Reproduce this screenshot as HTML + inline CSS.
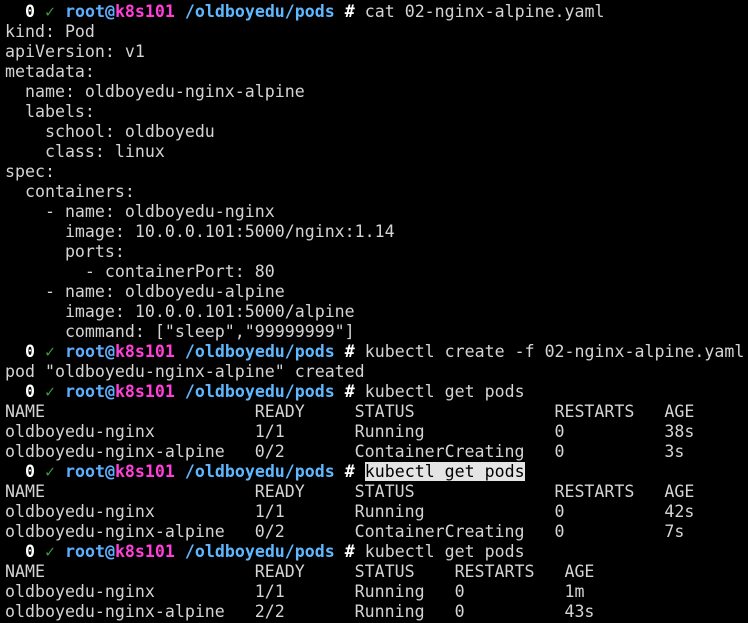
<!DOCTYPE html><html><head><style>
html,body{margin:0;background:#000;}
body{width:748px;height:623px;overflow:hidden;}
pre{margin:0;padding:2px 0 0 5px;font-family:"DejaVu Sans Mono","Liberation Mono",monospace;font-size:16.6px;line-height:20px;color:#d4d4d4;white-space:pre;}
.w{color:#fff;font-weight:bold}.g{color:#3a9a3a}.b{color:#5fafff;font-weight:bold}.m{color:#ff3fd8;font-weight:bold}.c{color:#5fb8ff;font-weight:bold}
.s{background:#e4e4e4;color:#000}
</style></head><body><pre><span class="w">  0</span> <span class="g">✓</span> <span class="b">root@</span><span class="m">k8s101</span> <span class="c">/oldboyedu/pods</span> <span class="w">#</span> cat 02-nginx-alpine.yaml
kind: Pod
apiVersion: v1
metadata:
  name: oldboyedu-nginx-alpine
  labels:
    school: oldboyedu
    class: linux
spec:
  containers:
    - name: oldboyedu-nginx
      image: 10.0.0.101:5000/nginx:1.14
      ports:
        - containerPort: 80
    - name: oldboyedu-alpine
      image: 10.0.0.101:5000/alpine
      command: ["sleep","99999999"]
<span class="w">  0</span> <span class="g">✓</span> <span class="b">root@</span><span class="m">k8s101</span> <span class="c">/oldboyedu/pods</span> <span class="w">#</span> kubectl create -f 02-nginx-alpine.yaml
pod "oldboyedu-nginx-alpine" created
<span class="w">  0</span> <span class="g">✓</span> <span class="b">root@</span><span class="m">k8s101</span> <span class="c">/oldboyedu/pods</span> <span class="w">#</span> kubectl get pods
NAME                     READY     STATUS              RESTARTS   AGE
oldboyedu-nginx          1/1       Running             0          38s
oldboyedu-nginx-alpine   0/2       ContainerCreating   0          3s
<span class="w">  0</span> <span class="g">✓</span> <span class="b">root@</span><span class="m">k8s101</span> <span class="c">/oldboyedu/pods</span> <span class="w">#</span> <span class="s">kubectl get pods</span>
NAME                     READY     STATUS              RESTARTS   AGE
oldboyedu-nginx          1/1       Running             0          42s
oldboyedu-nginx-alpine   0/2       ContainerCreating   0          7s
<span class="w">  0</span> <span class="g">✓</span> <span class="b">root@</span><span class="m">k8s101</span> <span class="c">/oldboyedu/pods</span> <span class="w">#</span> kubectl get pods
NAME                     READY     STATUS    RESTARTS   AGE
oldboyedu-nginx          1/1       Running   0          1m
oldboyedu-nginx-alpine   2/2       Running   0          43s
</pre></body></html>
